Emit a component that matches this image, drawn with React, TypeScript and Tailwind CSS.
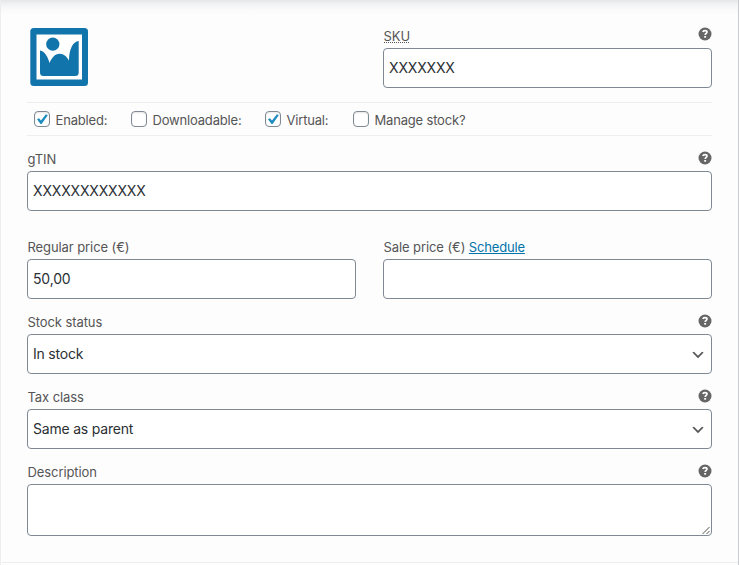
import type { ReactNode } from "react";

function HelpTip({ className }: { className: string }) {
  return (
    <svg className={`h-[14px] w-[14px] shrink-0 ${className}`} viewBox="0 0 14 14" role="img" aria-label="Help">
      <circle cx="7" cy="7" r="6.5" fill="#666" />
      <path d="M4.900 5C5.100 3.900 6 3.600 7 3.600c1.200 0 2 .5 2 1.500 0 1.400-1.800 1.300-1.800 3" fill="none" stroke="#fff" strokeWidth="1.700" />
      <rect x="6.200" y="9" width="1.900" height="1.700" fill="#fff" />
    </svg>
  );
}

function Field({
  label,
  help,
  tipClass = "mt-1",
  className = "",
  children,
}: {
  label: ReactNode;
  help?: boolean;
  tipClass?: string;
  className?: string;
  children: ReactNode;
}) {
  return (
    <div className={`flex min-w-0 flex-1 flex-col ${className}`}>
      <div className="flex h-6 justify-between">
        <label className="pl-[0.5px] text-[13px] leading-6 tracking-[-0.09px] text-[#555]">{label}</label>
        {help && <HelpTip className={tipClass} />}
      </div>
      {children}
    </div>
  );
}

function TextInput({ value }: { value: string }) {
  return (
    <input
      type="text"
      defaultValue={value}
      className="h-10 w-full rounded-[4px] border border-[#7e8993] bg-white px-[5px] pb-[2px] text-[14px] tracking-[-0.17px] text-[#2b3035] outline-none"
    />
  );
}

function Select({ value }: { value: string }) {
  return (
    <div className="flex h-10 items-center justify-between rounded-[4px] border border-[#7e8993] bg-white px-[5px] text-[14px] tracking-[-0.2px] text-[#2b3035]">
      <span className="pb-[2px]">{value}</span>
      <svg className="mt-[2px] h-4 w-4" viewBox="0 0 20 20">
        <path d="M5 6l5 5 5-5 2 1-7 7-7-7 2-1z" fill="#555" />
      </svg>
    </div>
  );
}

function Check({ label, checked, className }: { label: string; checked?: boolean; className: string }) {
  return (
    <label className={`flex items-center text-[13px] tracking-[-0.18px] text-[#555] ${className}`}>
      <span className="flex h-4 w-4 shrink-0 items-center justify-center rounded-[4px] border border-[#7e8993] bg-white shadow-[inset_0_1px_2px_rgba(0,0,0,0.1)]">
        {checked && (
          <svg className="h-[14px] w-[14px] shrink-0" viewBox="0 0 14 14">
            <path d="M2 7.300L4 6.200 6 8.500 10.900 2.300 12.800 3.300 6.600 12 5.500 12Z" fill="#1e8cbe" />
          </svg>
        )}
      </span>
      <span className="mt-[3px] ml-[5.5px] whitespace-nowrap">{label}</span>
    </label>
  );
}

export default function App() {
  return (
    <div className="h-[565px] w-[739px] border-r border-l border-r-[#c8cacf] border-l-[#eeeeee] bg-[#fdfdfd] font-['Inter',sans-serif]">
      <div className="flex h-full flex-col bg-[linear-gradient(to_bottom,#e5e6e8_0px,#f3f4f5_5px,#fafafa_10px,#fdfdfd_16px)]">
        <div className="ml-px flex h-[563px] flex-col border-b border-[#eeeeee] pt-6 pr-[26px] pl-[25px]">
          <div className="flex gap-[27px]">
            <div className="min-w-0 flex-1">
              <svg className="mt-1 ml-[3px] h-[58px] w-[58px]" viewBox="0 0 58 58" role="img" aria-label="Variation image">
                <rect x="0.300" width="57.700" height="58" rx="3.500" fill="#1174aa" />
                <rect x="6.500" y="6.500" width="45.500" height="45" fill="#fff" />
                <circle cx="22.800" cy="16.200" r="6.600" fill="#1174aa" />
                <path d="M10 22.500C14.500 23 18 29 19.500 35 21.500 30 25 25.700 29.500 25.700 34 25.700 37 29 39 32.500 39 21 43 13.500 48.700 13V44.500Q48.700 48 45.200 48H13.500Q10 48 10 44.500Z" fill="#1174aa" />
              </svg>
            </div>
            <Field
              help
              tipClass="mt-[3px]"
              label={
                <abbr className="inline-block h-[19px] bg-[repeating-linear-gradient(to_right,#555_0px,#555_1px,transparent_1px,transparent_2px)] bg-[length:100%_1px] bg-bottom bg-no-repeat no-underline">
                  SKU
                </abbr>
              }
            >
              <TextInput value="XXXXXXX" />
            </Field>
          </div>

          <div className="mt-[14px] flex h-[34px] items-center border-t border-b border-[#eeeeee] pl-[7px]">
            <Check label="Enabled:" checked className="w-[97px]" />
            <Check label="Downloadable:" className="w-[134px]" />
            <Check label="Virtual:" checked className="w-[88px]" />
            <Check label="Manage stock?" className="w-[130px]" />
          </div>

          <Field help label="gTIN" className="mt-[11px] flex-none">
            <TextInput value="XXXXXXXXXXXX" />
          </Field>

          <div className="mt-6 flex gap-[27px]">
            <Field label="Regular price (€)">
              <TextInput value="50,00" />
            </Field>
            <Field
              label={
                <>
                  Sale price (€){" "}
                  <a className="tracking-[-0.17px] text-[#0073aa] underline" href="#">
                    Schedule
                  </a>
                </>
              }
            >
              <TextInput value="" />
            </Field>
          </div>

          <Field help label="Stock status" className="mt-[11px] flex-none">
            <Select value="In stock" />
          </Field>
          <Field help label="Tax class" className="mt-[11px] flex-none">
            <Select value="Same as parent" />
          </Field>
          <Field help label="Description" className="mt-[11px] flex-none">
            <div className="flex h-[52px] items-end justify-end rounded-[4px] border border-[#7e8993] bg-white">
              <svg className="h-[9px] w-[9px]" viewBox="0 0 9 9">
                <path d="M.5 8L7.500 1M4.500 8L7.500 5" fill="none" stroke="#555" strokeWidth="1" />
              </svg>
            </div>
          </Field>
        </div>
      </div>
    </div>
  );
}
